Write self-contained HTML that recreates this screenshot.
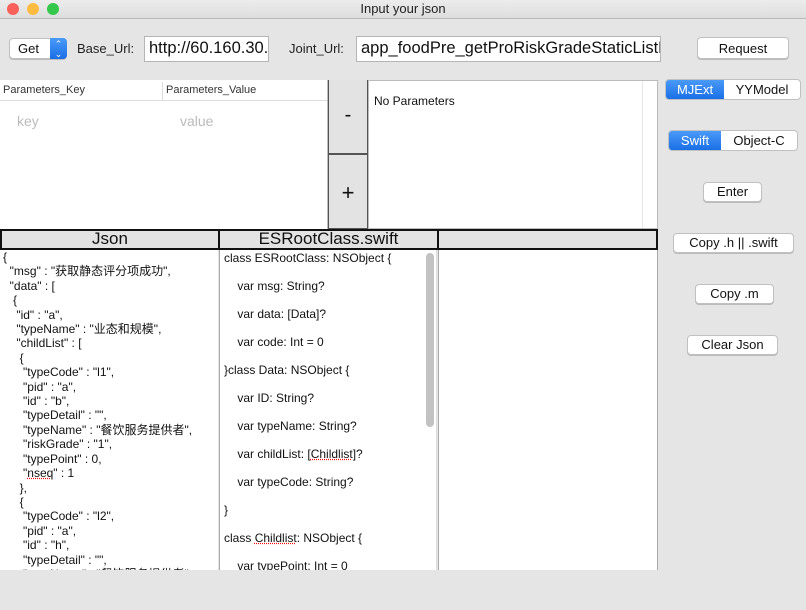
<!DOCTYPE html>
<html><head><meta charset="utf-8"><style>
*{box-sizing:border-box;margin:0;padding:0}
body{width:806px;height:610px;background:#e5e5e5;font-family:"Liberation Sans","Noto Sans CJK SC",sans-serif;position:relative;overflow:hidden;color:#111}
.a{position:absolute}
.title{left:0;top:0;width:806px;height:19px;background:linear-gradient(#ececec,#dedede);border-bottom:1px solid #b8b8b8;text-align:center;font-size:13px;line-height:18px;color:#222}
.dot{width:12px;height:12px;border-radius:50%;top:3px}
.tf{background:#fff;border:1px solid #b5b5b5;font-size:16.5px;line-height:23px;padding-left:4px;white-space:nowrap;overflow:hidden}
.btn{background:#fff;border:1px solid #c0c0c0;border-radius:4px;font-size:13px;text-align:center;line-height:18px;box-shadow:0 1px 0 #bbb}
.lbl{font-size:13px;color:#222}
.seg{display:flex;border:1px solid #c0c0c0;border-radius:4px;overflow:hidden;font-size:13px;line-height:19px;background:#fff}
.seg div{text-align:center}
.on{background:linear-gradient(#4a9af8,#1a6fe6);color:#fff}
.hd{background:#e3e3e3;border:2px solid #111;font-size:17px;text-align:center;line-height:16px}
.js{font-size:12px;line-height:14.4px;white-space:pre;left:3px;top:250px}
.sw div{height:28px;font-size:12px;line-height:14px;white-space:pre}
u{text-decoration:underline dotted red}
</style></head><body>
<div class="a title">Input your json</div>
<div class="a dot" style="left:7px;background:#fc605b"></div>
<div class="a dot" style="left:27px;background:#fdbc40"></div>
<div class="a dot" style="left:47px;background:#34c84a"></div>

<div class="a btn" style="left:9px;top:38px;width:58px;height:21px;text-align:left;padding-left:8px;line-height:19px">Get</div>
<div class="a" style="left:50px;top:38px;width:17px;height:21px;background:linear-gradient(#4a9af8,#1a6fe6);border-radius:0 4px 4px 0;color:#fff;font-size:9px;text-align:center;line-height:10px;padding-top:1px">⌃<br>⌄</div>
<div class="a lbl" style="left:77px;top:41px">Base_Url:</div>
<div class="a tf" style="left:144px;top:36px;width:125px;height:26px">http://60.160.30.</div>
<div class="a lbl" style="left:289px;top:41px">Joint_Url:</div>
<div class="a tf" style="left:356px;top:36px;width:305px;height:26px">app_foodPre_getProRiskGradeStaticListFo</div>
<div class="a btn" style="left:697px;top:37px;width:92px;height:22px;line-height:21px">Request</div>

<div class="a" style="left:0;top:80px;width:328px;height:149px;background:#fff;border-right:1px solid #bbb"></div>
<div class="a" style="left:0;top:80px;width:327px;height:21px;border-bottom:1px solid #ddd;font-size:11px;line-height:20px;color:#333">&nbsp;Parameters_Key</div>
<div class="a" style="left:162px;top:82px;width:1px;height:18px;background:#ddd"></div>
<div class="a" style="left:166px;top:80px;font-size:11px;line-height:20px;color:#333">Parameters_Value</div>
<div class="a" style="left:17px;top:113px;font-size:14px;color:#bbb">key</div>
<div class="a" style="left:180px;top:113px;font-size:14px;color:#bbb">value</div>
<div class="a" style="left:328px;top:80px;width:40px;height:74px;background:#e3e3e3;border:1px solid #555;border-top:none;font-size:20px;text-align:center;line-height:70px">-</div>
<div class="a" style="left:328px;top:154px;width:40px;height:75px;background:#e3e3e3;border:1px solid #555;font-size:22px;text-align:center;line-height:76px">+</div>
<div class="a" style="left:368px;top:80px;width:290px;height:149px;background:#fff;border:1px solid #bbb"></div>
<div class="a" style="left:642px;top:81px;width:1px;height:147px;background:#e6e6e6"></div>
<div class="a" style="left:374px;top:94px;font-size:12px">No Parameters</div>

<div class="a seg" style="left:665px;top:79px;width:136px;height:21px"><div class="on" style="width:58px">MJExt</div><div style="flex:1">YYModel</div></div>
<div class="a seg" style="left:668px;top:130px;width:130px;height:21px"><div class="on" style="width:52px">Swift</div><div style="flex:1">Object-C</div></div>
<div class="a btn" style="left:703px;top:182px;width:59px;height:20px">Enter</div>
<div class="a btn" style="left:673px;top:233px;width:121px;height:20px">Copy .h || .swift</div>
<div class="a btn" style="left:695px;top:284px;width:79px;height:20px">Copy .m</div>
<div class="a btn" style="left:687px;top:335px;width:91px;height:20px">Clear Json</div>

<div class="a hd" style="left:0;top:229px;width:220px;height:21px">Json</div>
<div class="a hd" style="left:218px;top:229px;width:221px;height:21px">ESRootClass.swift</div>
<div class="a hd" style="left:437px;top:229px;width:221px;height:21px"></div>
<div class="a" style="left:0;top:250px;width:218px;height:320px;background:#fff;overflow:hidden">
<div class="a js" style="top:0">{
  "msg" : "获取静态评分项成功",
  "data" : [
   {
    "id" : "a",
    "typeName" : "业态和规模",
    "childList" : [
     {
      "typeCode" : "l1",
      "pid" : "a",
      "id" : "b",
      "typeDetail" : "",
      "typeName" : "餐饮服务提供者",
      "riskGrade" : "1",
      "typePoint" : 0,
      "<u>nseq</u>" : 1
     },
     {
      "typeCode" : "l2",
      "pid" : "a",
      "id" : "h",
      "typeDetail" : "",
      "typeName" : "餐饮服务提供者",</div></div>
<div class="a" style="left:219px;top:250px;width:218px;height:320px;background:#fff;border-left:1px solid #aaa;overflow:hidden">
<div class="a sw" style="left:4px;top:1px">
<div>class ESRootClass: NSObject {</div><div>    var msg: String?</div><div>    var data: [Data]?</div><div>    var code: Int = 0</div><div>}class Data: NSObject {</div><div>    var ID: String?</div><div>    var typeName: String?</div><div>    var childList: [<u>Childlist</u>]?</div><div>    var typeCode: String?</div><div>}</div><div>class <u>Childlist</u>: NSObject {</div><div>    var typePoint: Int = 0</div></div>
<div class="a" style="left:206px;top:3px;width:8px;height:174px;background:#c2c2c2;border-radius:4px"></div>
<div class="a" style="left:216px;top:0;width:1px;height:320px;background:#ddd"></div>
</div>
<div class="a" style="left:438px;top:250px;width:220px;height:320px;background:#fff;border-left:1px solid #aaa;border-right:1px solid #aaa"></div>
</body></html>
